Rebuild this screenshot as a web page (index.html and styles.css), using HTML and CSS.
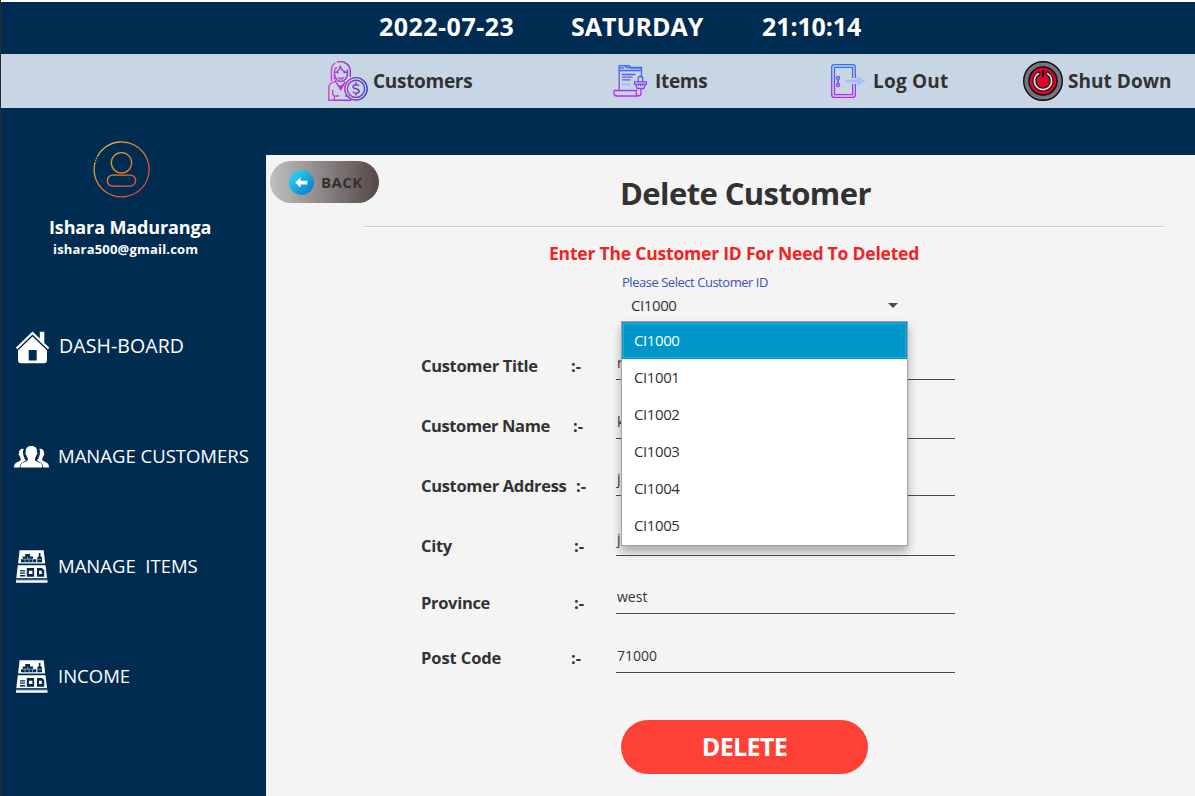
FILE: index.html
```html
<!DOCTYPE html>
<html lang="en">
<head>
<meta charset="utf-8">
<title>Delete Customer</title>
<link rel="stylesheet" href="styles.css">
</head>
<body>
<div class="window">
  <header class="clock-bar">
    <span class="clock-date">2022-07-23</span>
    <span class="clock-day">SATURDAY</span>
    <span class="clock-time">21:10:14</span>
  </header>

  <nav class="top-nav">
    <a class="nav-item nav-customers">
      <svg width="40" height="40" viewBox="0 0 40 40" fill="none" stroke="url(#gCust)" stroke-width="1.4">
        <defs><linearGradient id="gCust" gradientUnits="userSpaceOnUse" x1="0" y1="20" x2="40" y2="20"><stop offset="0" stop-color="#d63fd8"/><stop offset="0.5" stop-color="#9a35c8"/><stop offset="1" stop-color="#3d3fb8"/></linearGradient></defs>
        <path d="M3.400 20V9.500C3.400 6 5 3.300 7.200 2M9 1.200C15.500-.8 22.300 3.400 22.300 10v6"/>
        <path d="M6.400 18.500v-8.200c0-1.600.9-3.100 2.400-3.900M6.400 11.600c3.300-.6 5.400-3 5.700-6.900 1 4.100 3.200 6.500 7.300 6.900M19.400 8.500v6.500M6.600 12.500c0 4 2.500 8 6.200 8 3.800 0 6.500-4 6.500-8M10.300 16.400c1.600 1.600 3.800 1.600 5.400 0M9 11.900h1.600M15.400 11.900h1.600"/>
        <path d="M7.500 20.600C3.500 21 .8 23.600.8 27.500v11.700h22.500M7.700 20.700l5 8 4.500-8M7.700 20.700v-2M4.700 29v4.500l1.700 1.500v4M9.500 23.500l3.200 3 2.600-3M12.700 28.700v-4.500M11 35h-3.700M17 35h3.200"/>
        <circle cx="28" cy="27.800" r="11.200"/><circle cx="28" cy="27.800" r="8.600"/>
        <path d="M31 24.700c-.6-.8-1.600-1-3-1-1.900 0-3 .8-3 2 0 3.100 6.100 1.100 6.100 4.200 0 1.400-1.200 2.200-3.100 2.200-1.500 0-2.600-.4-3.200-1.200M28 21.300v2.400M28 32.100v2.400"/>
      </svg>
      <span>Customers</span>
    </a>
    <a class="nav-item nav-items">
      <svg width="34" height="34" viewBox="0 0 34 34" fill="none" stroke="url(#gItem)" stroke-width="1.300">
        <defs><linearGradient id="gItem" gradientUnits="userSpaceOnUse" x1="0" y1="0" x2="0" y2="33"><stop offset="0" stop-color="#1f78f5"/><stop offset="1" stop-color="#c724ee"/></linearGradient></defs>
        <path d="M6.200 26V1.700h5.600l1.500 1.800H28.500V14M6.200 6.500H28.500M11.500 1.700h4.500l2 2.500H28.500M6.200 3.900h5"/>
        <path d="M9 10.500h13.500M9 13.200h10.500M9 15.900h8.500"/>
        <path d="M9 20.400h8" stroke="#a7b8fa" stroke-width="1.800"/>
        <path d="M1 26.500h22.200v3c0 3 4.800 3 4.800 0v-5.600M1 26.500v2.800c0 1.800 1 2.700 2.700 2.700h22"/>
        <path d="M21.500 17.800h11.800v2.500H21.500zM22.600 20.500l1.500 4h6.700l1.500-4M25.200 17.500V15c0-3.800 4.600-3.800 4.600 0v2.500" />
        <path d="M25.600 19.500v2.700M27.600 19.500v2.700M29.600 19.500v2.700" stroke-width="1"/>
      </svg>
      <span>Items</span>
    </a>
    <a class="nav-item nav-logout">
      <svg width="36" height="36" viewBox="0 0 36 36" fill="none" stroke="url(#gDoor)" stroke-width="1.300">
        <defs><linearGradient id="gDoor" gradientUnits="userSpaceOnUse" x1="0" y1="0" x2="0" y2="35"><stop offset="0" stop-color="#187cf8"/><stop offset="1" stop-color="#cf1cec"/></linearGradient></defs>
        <path d="M25.300 15V4.300C25.300 2.500 24.400 1.600 22.600 1.600H4.400C2.600 1.600 1.700 2.500 1.700 4.300v27.400c0 1.800.9 2.700 2.700 2.700h18.200c1.800 0 2.700-.9 2.700-2.700V21"/>
        <path d="M22.600 15V4.400H4.500v27.200h18.100V21"/>
        <circle cx="8.100" cy="15" r="1.500"/><circle cx="8.100" cy="22" r="1.500"/><path d="M8.100 16.500v4" stroke-width="1.600"/>
        <path d="M15.500 16.800h11.800v-3.600l8.200 4.900-8.200 4.900v-3.700H15.500z" fill="#a9b9ff" stroke="none"/>
      </svg>
      <span>Log Out</span>
    </a>
    <a class="nav-item nav-shutdown">
      <svg width="40" height="40" viewBox="0 0 40 40" fill="none">
        <circle cx="20" cy="20" r="19.300" fill="#77737f" stroke="#0c0b10" stroke-width="1.400"/>
        <circle cx="20" cy="20" r="14" fill="#e00428" stroke="#0c0b10" stroke-width="1.500"/>
        <path d="M15.600 12.600a8.600 8.600 0 1 0 8.800 0" stroke="#0c0b10" stroke-width="3.900" stroke-linecap="round"/>
        <path d="M15.600 12.600a8.600 8.600 0 1 0 8.800 0" stroke="#dedde3" stroke-width="1.700" stroke-linecap="round"/>
        <path d="M20 9.500v6.700" stroke="#0c0b10" stroke-width="1.800"/>
      </svg>
      <span>Shut Down</span>
    </a>
  </nav>

  <div class="body">
    <aside class="sidebar">
      <div class="profile">
        <svg class="avatar" width="58" height="58" viewBox="0 0 58 58" fill="none" stroke="url(#gUser)" stroke-width="1.300">
          <defs><linearGradient id="gUser" gradientUnits="userSpaceOnUse" x1="8" y1="8" x2="50" y2="50"><stop offset="0" stop-color="#d9b52c"/><stop offset="0.5" stop-color="#e07c35"/><stop offset="1" stop-color="#e8382d"/></linearGradient></defs>
          <path d="M4.200 15.800A27.500 27.500 0 1 1 2.100 21.200"/>
          <path d="M3.800 16.800l-1.500 3.400" stroke-dasharray="1.200 1"/>
          <circle cx="28.500" cy="21.800" r="10.200"/>
          <rect x="14.300" y="34.100" width="28.400" height="11" rx="5.500"/>
        </svg>
        <div class="profile-name"><span>Ishara Maduranga</span></div>
        <div class="profile-mail"><span>ishara500@gmail.com</span></div>
      </div>
      <ul class="menu">
        <li class="menu-item menu-dash">
          <svg width="36" height="36" viewBox="0 -.5 36 36" fill="#fff">
            <path d="M.8 19.200L17.500 3 24.800 10V3.200h4.500v11.200l5 4.800-1.500 1.500L17.500 6 2.300 20.700z"/>
            <path fill-rule="evenodd" d="M17.500 8.100L32 21.900V31.500a3.300 3.300 0 0 1-3.300 3.300H6.300A3.300 3.300 0 0 1 3 31.500V21.900zM13.700 21.500v10.500h8V21.500z"/>
          </svg>
          <span>DASH-BOARD</span>
        </li>
        <li class="menu-item menu-cust">
          <svg width="36" height="36" viewBox="0 -3 36 36" fill="#fff">
            <path d="M9.700 8.700c-3-.4-5 1.300-4.600 4.300-.8.700-.4 2.200.5 2.800.3 1.500 1.200 2.400 1.200 3.200 0 2.400-3.500 2.600-5.300 4.200C.3 24.300 0 26 0 27.500h5.800c.2-3.800 1.900-4.900 6.300-7-2.600-2.700-4-9-2.400-11.800zM25.300 8.700c3-.4 5 1.300 4.600 4.300.8.700.4 2.200-.5 2.800-.3 1.500-1.200 2.400-1.200 3.200 0 2.400 3.500 2.600 5.300 4.200 1.200 1.100 1.500 2.800 1.500 4.300h-5.800c-.2-3.800-1.900-4.900-6.300-7 2.600-2.700 4-9 2.400-11.800z"/>
            <path d="M17.400 6c-4 0-6 2.200-5.500 5.900-.9.700-.6 2.600.4 3.200.4 2 1.600 2.900 1.600 4.100 0 2.600-4 2.500-5.900 4.100-1.200 1-1.400 2.700-1.400 4.200h21.700c0-1.500-.3-3.200-1.500-4.200-1.900-1.600-5.900-1.500-5.900-4.100 0-1.200 1.200-2.100 1.600-4.100 1-.6 1.300-2.500.4-3.200.5-3.700-1.500-5.900-5.500-5.900z"/>
          </svg>
          <span>MANAGE CUSTOMERS</span>
        </li>
        <li class="menu-item menu-shop">
          <svg width="36" height="36" viewBox="0 -1 36 36"><use href="#shop"/></svg>
          <span>MANAGE&nbsp; ITEMS</span>
        </li>
        <li class="menu-item menu-income">
          <svg width="36" height="36" viewBox="0 -1 36 36">
            <defs><g id="shop">
              <path d="M5.600 2.200H29.700L31.200 15.600H4.100zM3.800 17.300H31.500L33 30H2.300zM2 32.200h31.500v2.600H2z" fill="#fff"/>
              <path d="M2 31.100h31.500" stroke="#7d91a8" stroke-width=".8"/>
              <path d="M11.300 6h4.800v2.600h3v2.600h3.200v3H7v-3h1.700V8.600h2.600zM24.800 5h1.700v3.300l1.500 1v4.900h-4.600V9.300l1.400-1zM6 22.200h5.200v1.200H6zM6 24.600h5.200v1.200H6zM6 27h5.200v1.500H6zM12.800 20h7.300v8.700h-7.300zM23 20h4.900l2.300 2v6.700H23z" fill="#002c52"/>
              <path d="M8.700 11.100h11M13.700 8.600v2.500M11 11.100v3M15.100 11.100v3M18.500 11.100v3M24 11.300h3.500" stroke="#fff" stroke-width=".5"/>
              <path d="M14.900 22.700h3.500v3.400h-3.500zM25 22.700h2.800v3.400H25z" fill="#fff"/>
            </g></defs>
            <use href="#shop"/>
          </svg>
          <span>INCOME</span>
        </li>
      </ul>
    </aside>

    <main class="panel">
      <button class="back" type="button">
        <svg width="25" height="25" viewBox="0 0 25 25">
          <defs><linearGradient id="gBack" x1="0" y1="0" x2="1" y2="1"><stop offset="0.1" stop-color="#2bd6f0"/><stop offset="0.9" stop-color="#087fc8"/></linearGradient></defs>
          <circle cx="12.500" cy="12.500" r="12.500" fill="url(#gBack)"/>
          <path d="M6.200 12.500l5.300-5.200v3.400h6.700v3.700h-6.700v3.400z" fill="#fff"/>
        </svg>
        <span>BACK</span>
      </button>
      <h1 class="title"><span>Delete Customer</span></h1>
      <hr class="rule">
      <p class="hint"><span>Enter The Customer ID For Need To Deleted</span></p>

      <div class="select">
        <div class="select-label"><span>Please Select Customer ID</span></div>
        <div class="select-value"><span>CI1000</span><i class="caret"></i></div>
        <ul class="options">
          <li class="option selected">CI1000</li>
          <li class="option">CI1001</li>
          <li class="option">CI1002</li>
          <li class="option">CI1003</li>
          <li class="option">CI1004</li>
          <li class="option">CI1005</li>
        </ul>
      </div>

      <div class="form">
        <div class="labels">
          <label class="l-title">Customer Title</label><span class="c1">:-</span>
          <label class="l-name">Customer Name</label><span class="c2">:-</span>
          <label class="l-addr">Customer Address</label><span class="c3">:-</span>
          <label class="l-city">City</label><span class="c4">:-</span>
          <label class="l-prov">Province</label><span class="c5">:-</span>
          <label class="l-post">Post Code</label><span class="c6">:-</span>
        </div>
        <div class="fields">
          <div class="field">r</div>
          <div class="field">k</div>
          <div class="field">j</div>
          <div class="field">j</div>
          <div class="field">west</div>
          <div class="field">71000</div>
        </div>
      </div>

      <button class="delete" type="button"><span>DELETE</span></button>
    </main>
  </div>
</div>
</body>
</html>
```
FILE: styles.css
```css
* { box-sizing: border-box; }
body {
  margin: 0;
  font-family: "Open Sans", "Noto Sans", sans-serif;
  color: #323232;
  background: #002c52;
}
ul, h1, p { margin: 0; padding: 0; list-style: none; }
svg { display: block; flex: none; }
button { border: 0; padding: 0; font: inherit; color: inherit; }

.window {
  width: 1195px;
  height: 796px;
  overflow: hidden;
  display: flex;
  flex-direction: column;
  border-left: 1px solid #26282a;
  background: #002c52;
  white-space: nowrap;
}

.clock-bar {
  height: 54px;
  border-top: 2px solid #fdfdfd;
  padding-left: 378px;
  display: grid;
  grid-template-columns: 192px 191px 120px;
  align-items: center;
  font-size: 25px;
  font-weight: 700;
  line-height: 49px;
  padding-bottom: 3px;
  color: #fff;
}
.clock-date { letter-spacing: .48px; }
.clock-time { letter-spacing: -.1px; }

.top-nav {
  height: 54px;
  flex: none;
  background: #c8d5e5;
  padding-left: 327px;
  display: grid;
  grid-template-columns: 285px 217px 193px 170px;
  align-items: center;
  font-size: 19px;
  font-weight: 700;
}
.nav-item { display: flex; align-items: center; }
.nav-customers { gap: 5px; letter-spacing: -.3px; }
.nav-items { gap: 8px; letter-spacing: -.3px; }
.nav-logout { gap: 7px; letter-spacing: .2px; }
.nav-shutdown { gap: 5px; letter-spacing: .05px; }

.body { flex: 1; display: flex; }
.sidebar { width: 265px; flex: none; color: #fff; padding-top: 33px; }
.profile { height: 149px; }
.avatar { margin-left: 92px; }
.profile-name {
  margin: 15px 0 0 48px;
  font-size: 18px;
  font-weight: 700;
  line-height: 26px;
  letter-spacing: -.13px;
}
.profile-mail {
  margin-left: 52px;
  font-size: 13px;
  font-weight: 700;
  line-height: 18px;
  letter-spacing: .19px;
}
.menu { display: grid; grid-auto-rows: 110px; }
.menu-item {
  display: flex;
  align-items: center;
  gap: 8px;
  padding-left: 13px;
  font-size: 18.5px;
  font-weight: 400;
}
.menu-dash { font-size: 19.5px; padding: 1px 0 0 14px; }
.menu-dash span { padding-bottom: 1px; letter-spacing: .1px; }

.panel {
  flex: 1;
  margin-top: 47px;
  background: #f4f4f4;
  position: relative;
}
.back {
  position: absolute;
  left: 4px;
  top: 6px;
  width: 109px;
  height: 42px;
  border-radius: 21px;
  background: linear-gradient(90deg, #c0c0c0, #544747);
  display: flex;
  align-items: center;
  gap: 7px;
  padding-left: 19px;
  font-size: 15px;
  font-weight: 700;
  letter-spacing: .4px;
}
.title {
  padding: 16px 0 0 354px;
  font-size: 31px;
  font-weight: 700;
  line-height: 44px;
  letter-spacing: -.6px;
}
.rule {
  margin: 11px 31px 0 98px;
  height: 2px;
  border: 0;
  border-top: 1px solid #cbcbcb;
  background: #fff;
}
.hint {
  padding: 12px 0 1px 283px;
  font-size: 17.5px;
  font-weight: 700;
  line-height: 26px;
  letter-spacing: -.2px;
  color: #f32222;
}
.select { margin-left: 355px; width: 287px; position: relative; }
.select-label {
  margin-top: 6px;
  padding-left: 1px;
  font-size: 13px;
  line-height: 18px;
  letter-spacing: -.47px;
  color: #3f51b5;
}
.select-value {
  display: flex;
  align-items: center;
  justify-content: space-between;
  height: 30px;
  padding: 0 10px 2px;
  font-size: 15px;
  letter-spacing: -.4px;
}
.caret {
  border: 5px solid transparent;
  border-top-color: #4a4a4a;
  border-bottom: 0;
}
.options {
  position: absolute;
  left: 0;
  top: 48px;
  width: 287px;
  height: 225px;
  background: #fff;
  border: 1px solid #a3a3a3;
  box-shadow: 0 6px 9px rgba(0, 0, 0, .3);
  font-size: 15px;
  letter-spacing: -.4px;
  z-index: 2;
}
.option { height: 37px; line-height: 37px; padding-left: 12px; }
.option.selected {
  color: #fff;
  background: #0096c9;
  box-shadow: inset 0 0 0 1px #0096c9, inset 0 0 0 2px #2ba8d3;
}

.form { display: flex; padding-left: 155px; margin-top: 14px; height: 351px; }
.labels {
  width: 195px;
  display: grid;
  grid-template-columns: 150px 45px;
  grid-template-rows: 60px 60px 60px 60px 54px 56px;
  align-items: center;
  align-content: start;
  font-size: 16.5px;
  font-weight: 700;
}
.labels label { letter-spacing: -.32px; }
.labels .l-name { letter-spacing: -.4px; }
.labels .l-post { letter-spacing: -.1px; }
.c2 { padding-left: 2px; }
.c3 { padding-left: 5px; }
.c4, .c5 { padding-left: 3px; }
.fields {
  width: 339px;
  display: grid;
  grid-template-rows: 45px 59px 57px 60px 58px 59px;
  align-items: end;
  align-content: start;
  font-size: 14px;
}
.field {
  height: 34px;
  line-height: 34px;
  padding-left: 1px;
  border-bottom: 1px solid #4d4d4d;
}
.delete {
  display: block;
  margin: 34px 0 0 355px;
  width: 247px;
  height: 54px;
  border-radius: 27px;
  background: #ff4036;
  color: #fff;
  font-size: 25px;
  font-weight: 700;
  line-height: 53px;
  padding-bottom: 1px;
  letter-spacing: -.6px;
}
```
